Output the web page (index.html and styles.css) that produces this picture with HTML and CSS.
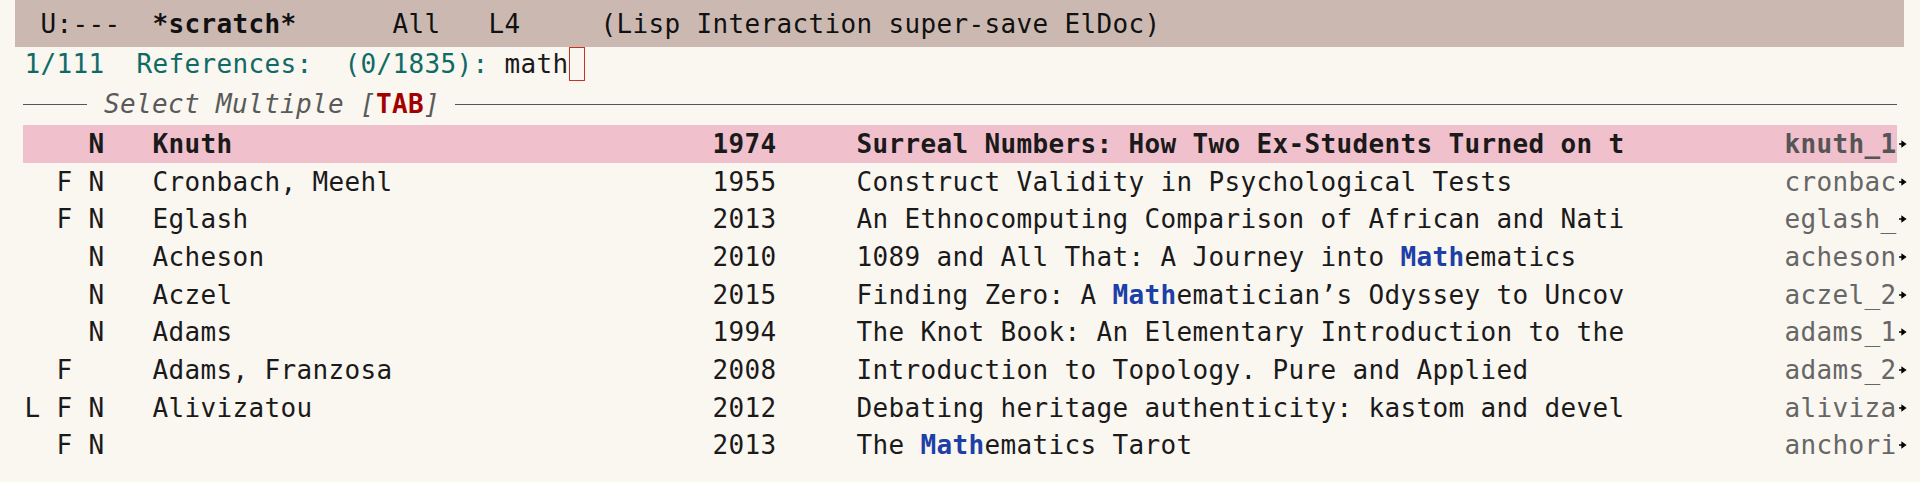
FILE: index.html
```html
<!DOCTYPE html>
<html>
<head>
<meta charset="utf-8">
<link rel="stylesheet" href="styles.css">
</head>
<body>
<div class="modeline"><span class="ml-text"> U:---  <b>*scratch*</b>      All   L4     (Lisp Interaction super-save ElDoc)</span></div>
<div class="frame">
  <div class="minibuffer"><span class="prompt">1/111  References:  (0/1835):</span> math<span class="cursor"></span></div>
  <div class="separator">
    <span class="rule rule-left"></span>
    <span class="sep-text">Select Multiple [<b class="key-tab">TAB</b>]</span>
    <span class="rule rule-right"></span>
  </div>
  <div class="list">
    <div class="row current">
      <span class="flags">    N</span><span class="author">Knuth</span><span class="year">1974</span><span class="title">Surreal Numbers: How Two Ex-Students Turned on t</span><span class="key">knuth_1</span><span class="trunc"><svg viewBox="0 0 8 8" width="8" height="8"><path d="M0 4H5M3 1.5L6.5 4L3 6.5Z" stroke="#000" stroke-width="1.3" fill="#000"/></svg></span>
    </div>
    <div class="row">
      <span class="flags">  F N</span><span class="author">Cronbach, Meehl</span><span class="year">1955</span><span class="title">Construct Validity in Psychological Tests</span><span class="key">cronbac</span><span class="trunc"><svg viewBox="0 0 8 8" width="8" height="8"><path d="M0 4H5M3 1.5L6.5 4L3 6.5Z" stroke="#000" stroke-width="1.3" fill="#000"/></svg></span>
    </div>
    <div class="row">
      <span class="flags">  F N</span><span class="author">Eglash</span><span class="year">2013</span><span class="title">An Ethnocomputing Comparison of African and Nati</span><span class="key">eglash_</span><span class="trunc"><svg viewBox="0 0 8 8" width="8" height="8"><path d="M0 4H5M3 1.5L6.5 4L3 6.5Z" stroke="#000" stroke-width="1.3" fill="#000"/></svg></span>
    </div>
    <div class="row">
      <span class="flags">    N</span><span class="author">Acheson</span><span class="year">2010</span><span class="title">1089 and All That: A Journey into <b class="match">Math</b>ematics</span><span class="key">acheson</span><span class="trunc"><svg viewBox="0 0 8 8" width="8" height="8"><path d="M0 4H5M3 1.5L6.5 4L3 6.5Z" stroke="#000" stroke-width="1.3" fill="#000"/></svg></span>
    </div>
    <div class="row">
      <span class="flags">    N</span><span class="author">Aczel</span><span class="year">2015</span><span class="title">Finding Zero: A <b class="match">Math</b>ematician’s Odyssey to Uncov</span><span class="key">aczel_2</span><span class="trunc"><svg viewBox="0 0 8 8" width="8" height="8"><path d="M0 4H5M3 1.5L6.5 4L3 6.5Z" stroke="#000" stroke-width="1.3" fill="#000"/></svg></span>
    </div>
    <div class="row">
      <span class="flags">    N</span><span class="author">Adams</span><span class="year">1994</span><span class="title">The Knot Book: An Elementary Introduction to the</span><span class="key">adams_1</span><span class="trunc"><svg viewBox="0 0 8 8" width="8" height="8"><path d="M0 4H5M3 1.5L6.5 4L3 6.5Z" stroke="#000" stroke-width="1.3" fill="#000"/></svg></span>
    </div>
    <div class="row">
      <span class="flags">  F  </span><span class="author">Adams, Franzosa</span><span class="year">2008</span><span class="title">Introduction to Topology. Pure and Applied</span><span class="key">adams_2</span><span class="trunc"><svg viewBox="0 0 8 8" width="8" height="8"><path d="M0 4H5M3 1.5L6.5 4L3 6.5Z" stroke="#000" stroke-width="1.3" fill="#000"/></svg></span>
    </div>
    <div class="row">
      <span class="flags">L F N</span><span class="author">Alivizatou</span><span class="year">2012</span><span class="title">Debating heritage authenticity: kastom and devel</span><span class="key">aliviza</span><span class="trunc"><svg viewBox="0 0 8 8" width="8" height="8"><path d="M0 4H5M3 1.5L6.5 4L3 6.5Z" stroke="#000" stroke-width="1.3" fill="#000"/></svg></span>
    </div>
    <div class="row">
      <span class="flags">  F N</span><span class="author"></span><span class="year">2013</span><span class="title">The <b class="match">Math</b>ematics Tarot</span><span class="key">anchori</span><span class="trunc"><svg viewBox="0 0 8 8" width="8" height="8"><path d="M0 4H5M3 1.5L6.5 4L3 6.5Z" stroke="#000" stroke-width="1.3" fill="#000"/></svg></span>
    </div>
  </div>
</div>
</body>
</html>
```
FILE: styles.css
```css
html, body {
  margin: 0;
  padding: 0;
  background: #faf6f0;
}

body {
  font-family: "DejaVu Sans Mono", "Liberation Mono", monospace;
  font-size: 26px;
  letter-spacing: 0.347px;
  color: #1a1a1a;
  width: 1920px;
  height: 482px;
  overflow: hidden;
}

b { font-weight: bold; }

.modeline {
  margin-left: 15px;
  width: 1889px;
  height: 47px;
  background: #cbb9b1;
  display: flex;
  align-items: center;
  padding-left: 9.5px;
  box-sizing: border-box;
  white-space: pre;
  color: #111;
}

.frame {
  margin-left: 23px;
  width: 1874px;
}

.minibuffer {
  height: 34px;
  display: flex;
  align-items: center;
  padding-left: 1.5px;
  white-space: pre;
}

.prompt {
  color: #0f6a66;
}

.cursor {
  display: inline-block;
  width: 14px;
  height: 32px;
  border: 1px solid #c8302a;
}

.separator {
  height: 44px;
  box-sizing: border-box;
  padding-top: 2px;
  display: flex;
  align-items: center;
}

.rule {
  height: 1px;
  background: #555;
}

.rule-left {
  width: 64px;
  margin-right: 17px;
}

.rule-right {
  flex: 1;
  margin-left: 15px;
}

.sep-text {
  font-style: italic;
  color: #5a5a5a;
  white-space: pre;
}

.key-tab {
  font-style: normal;
  color: #a30000;
}

.list {
  display: flex;
  flex-direction: column;
}

.row {
  display: grid;
  grid-template-columns: 128px 560px 144px 928px 114px 12px;
  height: 37.7px;
  align-items: center;
  padding-left: 1.5px;
  white-space: pre;
  width: 1874px;
  box-sizing: border-box;
}

.row.current {
  background: #f0c1cd;
  font-weight: bold;
}

.key {
  color: #666;
}

.row.current .key {
  color: #555;
}

.trunc {
  display: flex;
  align-items: center;
}

.trunc svg {
  display: block;
}

.match {
  color: #1c3fa8;
}
```
